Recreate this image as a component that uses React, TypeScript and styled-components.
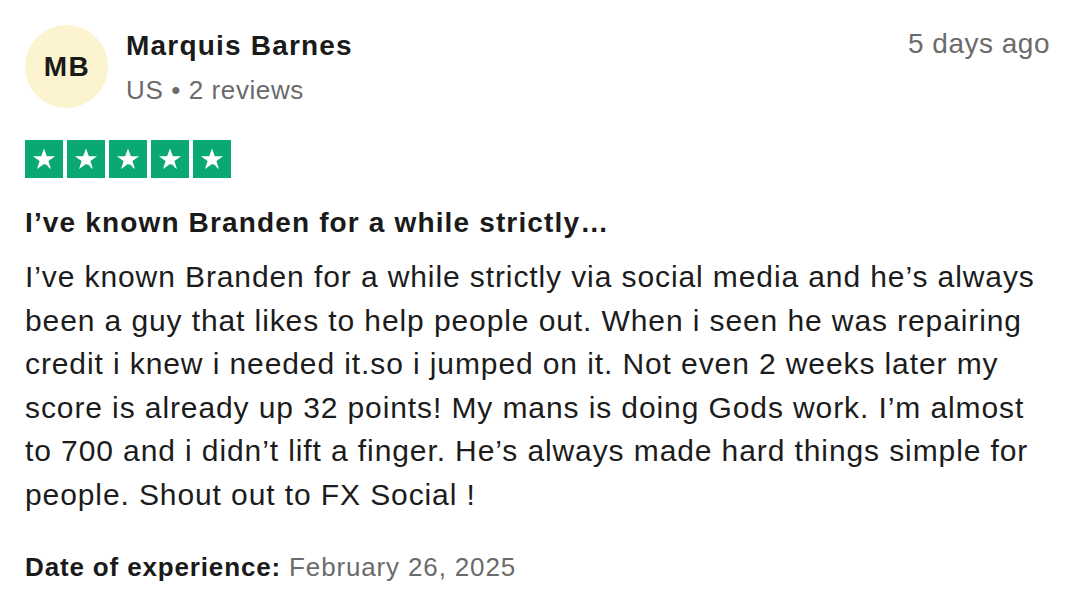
import * as React from 'react';
import styled, { createGlobalStyle } from 'styled-components';

const GlobalStyle = createGlobalStyle`
  html, body {
    margin: 0;
    padding: 0;
    background: #ffffff;
  }

  body {
    font-family: 'Liberation Sans', Arial, Helvetica, sans-serif;
    color: #1c1c1c;
    -webkit-font-smoothing: antialiased;
  }
`;

const review = {
  initials: 'MB',
  name: 'Marquis Barnes',
  country: 'US',
  reviews: 2,
  posted: '5 days ago',
  rating: 5,
  title: 'I’ve known Branden for a while strictly…',
  body:
    'I’ve known Branden for a while strictly via social media and he’s always been a guy that likes to help people out. When i seen he was repairing credit i knew i needed it.so i jumped on it. Not even 2 weeks later my score is already up 32 points! My mans is doing Gods work. I’m almost to 700 and i didn’t lift a finger. He’s always made hard things simple for people. Shout out to FX Social !',
  experienced: 'February 26, 2025',
};

const Star = () => (
  <svg width="26" height="26" viewBox="0 0 24 24" aria-hidden="true">
    <path
      d="M12 2.2l2.6 7.2h7.6l-6.1 4.5 2.3 7.3L12 16.7l-6.4 4.5 2.3-7.3-6.1-4.5h7.6z"
      fill="#ffffff"
    />
    <path d="M14.9 17.6l-2.9-.9 4.4 3.1z" fill="#0aa872" />
  </svg>
);

const App = () => (
  <>
    <GlobalStyle />
    <Card>
      <Header>
        <Avatar>{review.initials}</Avatar>
        <Consumer>
          <Name>{review.name}</Name>
          <Meta>
            {review.country} • {review.reviews} reviews
          </Meta>
        </Consumer>
        <Posted>{review.posted}</Posted>
      </Header>

      <Stars>
        {Array.from({ length: review.rating }).map((_, i) => (
          <StarBox key={i}>
            <Star />
          </StarBox>
        ))}
      </Stars>

      <Title>{review.title}</Title>
      <Body>{review.body}</Body>

      <Experience>
        <strong>Date of experience:</strong> <span>{review.experienced}</span>
      </Experience>
    </Card>
  </>
);

const Card = styled.article`
  padding: 25px 30px 0 25px;
  width: 1080px;
  box-sizing: border-box;
`;

const Header = styled.header`
  display: flex;
  align-items: flex-start;
`;

const Avatar = styled.div`
  width: 83px;
  height: 83px;
  border-radius: 50%;
  background: #fcf3cf;
  display: flex;
  align-items: center;
  justify-content: center;
  padding-left: 1px;
  box-sizing: border-box;
  font-size: 28px;
  font-weight: 700;
  color: #1a1a1a;
  letter-spacing: 1.5px;
  flex-shrink: 0;
`;

const Consumer = styled.div`
  display: flex;
  flex-direction: column;
  gap: 10px;
  margin-left: 18px;
  padding-top: 4px;
`;

const Name = styled.div`
  font-size: 28px;
  line-height: 34px;
  font-weight: 700;
  letter-spacing: 1.2px;
  color: #1a1a1a;
`;

const Meta = styled.div`
  font-size: 26px;
  line-height: 34px;
  letter-spacing: 0.6px;
  color: #6b6b6b;
`;

const Posted = styled.div`
  margin-left: auto;
  padding-top: 2px;
  font-size: 28px;
  line-height: 34px;
  letter-spacing: 0.5px;
  color: #6b6b6b;
`;

const Stars = styled.div`
  display: flex;
  gap: 4px;
  margin-top: 32px;
`;

const StarBox = styled.div`
  width: 38px;
  height: 38px;
  background: #0aa872;
  display: flex;
  align-items: center;
  justify-content: center;
`;

const Title = styled.h2`
  margin: 29px 0 0;
  font-size: 28px;
  line-height: 32px;
  font-weight: 700;
  letter-spacing: 1.15px;
  color: #1a1a1a;
`;

const Body = styled.p`
  margin: 16px 0 0;
  font-size: 30px;
  line-height: 43.6px;
  letter-spacing: 0.9px;
  color: #1c1c1c;
`;

const Experience = styled.p`
  margin: 34px 0 0;
  font-size: 26px;
  line-height: 32px;
  letter-spacing: 0.85px;

  strong {
    font-weight: 700;
    color: #1a1a1a;
  }

  span {
    color: #6b6b6b;
  }
`;

export default App;
